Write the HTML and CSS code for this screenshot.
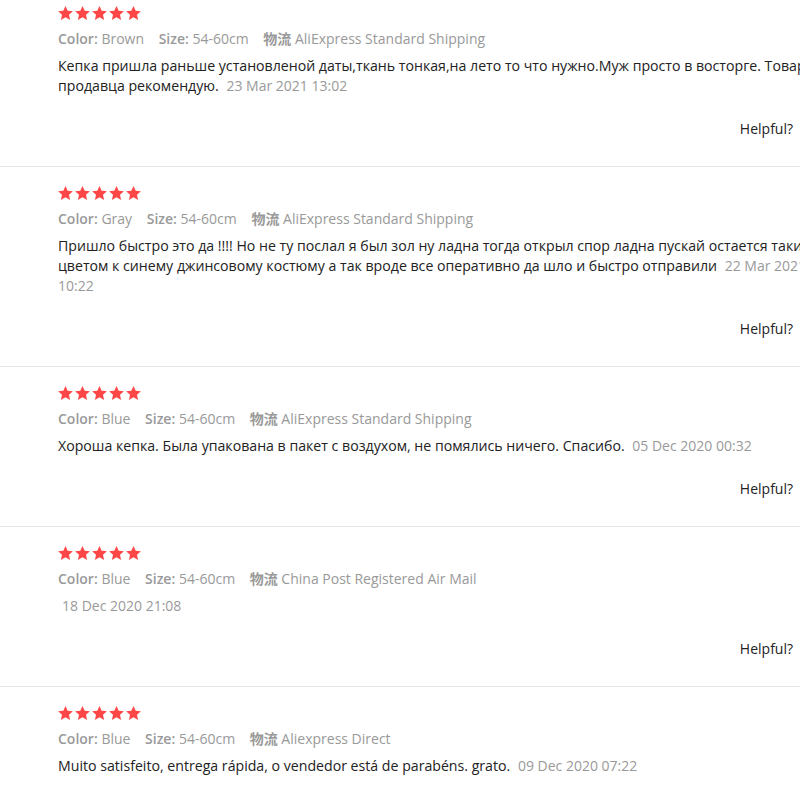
FILE: index.html
```html
<!DOCTYPE html>
<html lang="en">
<head>
    <meta charset="UTF-8" />
    <meta name="viewport" content="width=device-width, initial-scale=1.0" />
    <title>Feedback</title>
    <link rel="stylesheet" href="styles.css">
</head>
<body>
<svg width="0" height="0" class="defs">
    <defs>
        <polygon id="star" points="7.5,0 9.7,4.7 14.9,5.3 11,8.8 12.1,13.9 7.5,11.3 2.9,13.9 4,8.8 0.1,5.3 5.3,4.7" />
    </defs>
</svg>
<div class="feedback-list">

    <div class="feedback-item">
        <div class="stars"><svg width="85" height="14"><use href="#star" x="0"/><use href="#star" x="17"/><use href="#star" x="34"/><use href="#star" x="51"/><use href="#star" x="68"/></svg></div>
        <div class="meta">
            <span class="meta-item"><b>Color:</b> Brown</span>
            <span class="meta-item"><b>Size:</b> 54-60cm</span>
            <span class="meta-item"><b>物流</b> AliExpress Standard Shipping</span>
        </div>
        <div class="content">Кепка пришла раньше установленой даты,ткань тонкая,на лето то что нужно.Муж просто в восторге. Товар и продавца рекомендую. <span class="date">23 Mar 2021 13:02</span></div>
        <div class="helpful"><span>Helpful?</span></div>
    </div>

    <div class="feedback-item">
        <div class="stars"><svg width="85" height="14"><use href="#star" x="0"/><use href="#star" x="17"/><use href="#star" x="34"/><use href="#star" x="51"/><use href="#star" x="68"/></svg></div>
        <div class="meta">
            <span class="meta-item"><b>Color:</b> Gray</span>
            <span class="meta-item"><b>Size:</b> 54-60cm</span>
            <span class="meta-item"><b>物流</b> AliExpress Standard Shipping</span>
        </div>
        <div class="content">Пришло быстро это да !!!! Но не ту послал я был зол ну ладна тогда открыл спор ладна пускай остается таким цветом к синему джинсовому костюму а так вроде все оперативно да шло и быстро отправили <span class="date">22 Mar 2021 10:22</span></div>
        <div class="helpful"><span>Helpful?</span></div>
    </div>

    <div class="feedback-item">
        <div class="stars"><svg width="85" height="14"><use href="#star" x="0"/><use href="#star" x="17"/><use href="#star" x="34"/><use href="#star" x="51"/><use href="#star" x="68"/></svg></div>
        <div class="meta">
            <span class="meta-item"><b>Color:</b> Blue</span>
            <span class="meta-item"><b>Size:</b> 54-60cm</span>
            <span class="meta-item"><b>物流</b> AliExpress Standard Shipping</span>
        </div>
        <div class="content">Хороша кепка. Была упакована в пакет с воздухом, не помялись ничего. Спасибо. <span class="date">05 Dec 2020 00:32</span></div>
        <div class="helpful"><span>Helpful?</span></div>
    </div>

    <div class="feedback-item">
        <div class="stars"><svg width="85" height="14"><use href="#star" x="0"/><use href="#star" x="17"/><use href="#star" x="34"/><use href="#star" x="51"/><use href="#star" x="68"/></svg></div>
        <div class="meta">
            <span class="meta-item"><b>Color:</b> Blue</span>
            <span class="meta-item"><b>Size:</b> 54-60cm</span>
            <span class="meta-item"><b>物流</b> China Post Registered Air Mail</span>
        </div>
        <div class="content"><span class="date">18 Dec 2020 21:08</span></div>
        <div class="helpful"><span>Helpful?</span></div>
    </div>

    <div class="feedback-item">
        <div class="stars"><svg width="85" height="14"><use href="#star" x="0"/><use href="#star" x="17"/><use href="#star" x="34"/><use href="#star" x="51"/><use href="#star" x="68"/></svg></div>
        <div class="meta">
            <span class="meta-item"><b>Color:</b> Blue</span>
            <span class="meta-item"><b>Size:</b> 54-60cm</span>
            <span class="meta-item"><b>物流</b> Aliexpress Direct</span>
        </div>
        <div class="content">Muito satisfeito, entrega rápida, o vendedor está de parabéns. grato. <span class="date">09 Dec 2020 07:22</span></div>
        <div class="helpful"><span>Helpful?</span></div>
    </div>

</div>
</body>
</html>
```

FILE: styles.css
```css
body {
    margin: 0;
    background-color: #fff;
    font-family: "Open Sans", "Noto Sans CJK SC", sans-serif;
    font-size: 14px;
    color: #222;
    overflow: hidden;
}

.defs {
    display: block;
    height: 0;
}

.feedback-list {
    width: 860px;
    margin-top: -13px;
}

.feedback-item {
    padding: 19px 27px 27px 58px;
    border-bottom: 1px solid #e8e8e8;
}

.stars {
    height: 13px;
    line-height: 0;
    margin-bottom: 10px;
}

.stars svg {
    fill: #ff4747;
}

/* Color / Size / Shipping */
.meta {
    line-height: 20px;
    color: #999;
    margin-bottom: 7px;
}

.meta-item {
    margin-right: 11px;
}

.meta-item b {
    font-weight: 600;
}

.content {
    font-size: 14.15px;
    line-height: 20px;
}

.date {
    font-size: 14px;
    color: #999;
    margin-left: 4px;
}

.helpful {
    display: flex;
    justify-content: flex-end;
    line-height: 20px;
    margin-top: 23px;
}

.helpful span {
    margin-right: 40px;
}
```
